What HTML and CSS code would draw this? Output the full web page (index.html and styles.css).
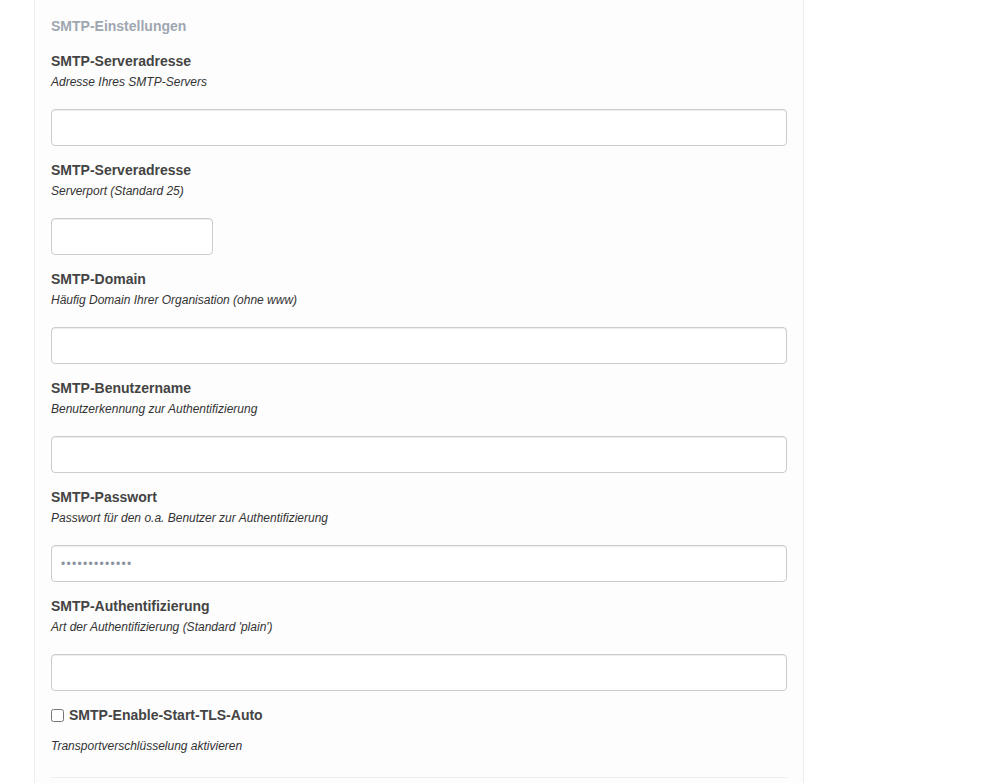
FILE: index.html
```html
<!DOCTYPE html>
<html lang="de">
<head>
<meta charset="utf-8">
<title>SMTP-Einstellungen</title>
<link rel="stylesheet" href="styles.css">
</head>
<body>
<div class="panel">
  <h3 class="section-title">SMTP-Einstellungen</h3>

  <div class="field">
    <label class="field-label" for="host">SMTP-Serveradresse</label>
    <p class="field-desc">Adresse Ihres SMTP-Servers</p>
    <input class="field-input" id="host" type="text">
  </div>

  <div class="field">
    <label class="field-label" for="port">SMTP-Serveradresse</label>
    <p class="field-desc">Serverport (Standard 25)</p>
    <input class="field-input field-input--short" id="port" type="text">
  </div>

  <div class="field">
    <label class="field-label" for="domain">SMTP-Domain</label>
    <p class="field-desc">Häufig Domain Ihrer Organisation (ohne www)</p>
    <input class="field-input" id="domain" type="text">
  </div>

  <div class="field">
    <label class="field-label" for="user">SMTP-Benutzername</label>
    <p class="field-desc">Benutzerkennung zur Authentifizierung</p>
    <input class="field-input" id="user" type="text">
  </div>

  <div class="field">
    <label class="field-label" for="pass">SMTP-Passwort</label>
    <p class="field-desc">Passwort für den o.a. Benutzer zur Authentifizierung</p>
    <input class="field-input field-input--password" id="pass" type="password" value="geheimespassw">
  </div>

  <div class="field">
    <label class="field-label" for="auth">SMTP-Authentifizierung</label>
    <p class="field-desc">Art der Authentifizierung (Standard 'plain')</p>
    <input class="field-input" id="auth" type="text">
  </div>

  <div class="check-field">
    <label class="check-label"><input class="check-box" type="checkbox"><span>SMTP-Enable-Start-TLS-Auto</span></label>
    <p class="check-desc">Transportverschlüsselung aktivieren</p>
  </div>

  <hr class="divider">
</div>
</body>
</html>
```

FILE: styles.css
```css
html, body {
  margin: 0;
  padding: 0;
  background: #ffffff;
}

body {
  font-family: "Liberation Sans", Arial, Helvetica, sans-serif;
  color: #333333;
}

.panel {
  box-sizing: border-box;
  width: 770px;
  min-height: 783px;
  margin-left: 34px;
  padding: 16px 16px 0;
  background: #fdfdfd;
  border-left: 1px solid #eeeeee;
  border-right: 1px solid #eeeeee;
}

.section-title {
  margin: 0 0 15px;
  font-size: 14px;
  line-height: 20px;
  font-weight: bold;
  color: #9ea7b1;
}

.field {
  margin-bottom: 14px;
}

.field-label {
  display: block;
  font-size: 14px;
  line-height: 20px;
  font-weight: bold;
  color: #444444;
}

.field-desc {
  margin: 1px 0 17px;
  font-size: 12px;
  line-height: 20px;
  font-style: italic;
  color: #333333;
}

.field-input {
  display: block;
  box-sizing: border-box;
  width: 100%;
  height: 37px;
  margin: 0;
  padding: 0 9px;
  border: 1px solid #cccccc;
  border-radius: 4px;
  background: #ffffff;
  box-shadow: inset 0 1px 1px rgba(0, 0, 0, 0.075);
  font-family: "Liberation Sans", Arial, sans-serif;
  font-size: 14px;
  color: #555555;
  outline: none;
}

.field-input--short {
  width: 162px;
}

.field-input--password {
  font-size: 12px;
  letter-spacing: 1.3px;
  color: #8a93a0;
}

.check-field {
  margin: 0;
}

.check-label {
  display: flex;
  align-items: center;
  gap: 5px;
  height: 20px;
  font-size: 14px;
  line-height: 20px;
  font-weight: bold;
  color: #444444;
}

.check-box {
  width: 13px;
  height: 13px;
  margin: 0;
}

.check-desc {
  margin: 11px 0 0;
  font-size: 12px;
  line-height: 20px;
  font-style: italic;
  color: #333333;
}

.divider {
  margin: 21px 0 0;
  border: 0;
  border-top: 1px solid #eeeeee;
  height: 0;
}
```
